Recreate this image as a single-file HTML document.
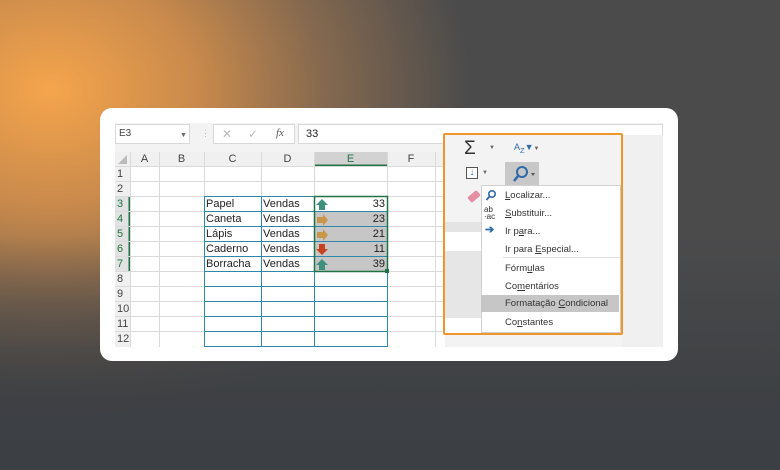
<!DOCTYPE html>
<html><head><meta charset="utf-8"><style>
*{margin:0;padding:0;box-sizing:border-box}
body{width:780px;height:470px;overflow:hidden;position:relative;font-family:"Liberation Sans",sans-serif;
background:radial-gradient(ellipse 420px 330px at 50px 90px,#f5a54c 0%,#c98a4c 35%,#85694f 65%,#4b4b4c 100%),#3d4044;}
.a{position:absolute}
.card{left:100px;top:108px;width:578px;height:253px;background:#fff;border-radius:12px}
.t{font-size:11px;color:#222;white-space:nowrap}
.h{font-size:11px;color:#444;text-align:center}
.m{font-size:9.5px;color:#333;white-space:nowrap}
</style></head><body>
<div class="a" style="left:0;top:0;width:780px;height:470px;background:linear-gradient(180deg,rgba(60,63,67,0) 50%,rgba(60,63,67,.9) 85%,#3c3f43 100%)"></div>
<div class="a card"></div>
<!-- excel area -->
<div class="a" style="left:115px;top:123px;width:548px;height:224px;background:#f3f3f3"></div>
<div class="a" style="left:115px;top:124px;width:75px;height:20px;background:#fff;border:1px solid #d8d8d8"></div>
<div class="a t" style="left:119px;top:128px;font-size:10px;color:#444">E3</div>
<div class="a" style="left:180px;top:132px;font-size:7px;color:#666">▼</div>
<div class="a" style="left:201px;top:128px;font-size:9px;color:#bbb">⋮</div>
<div class="a" style="left:213px;top:124px;width:82px;height:20px;background:#fff;border:1px solid #d8d8d8"></div>
<div class="a" style="left:222px;top:127px;font-size:12px;color:#bbb">✕</div>
<div class="a" style="left:248px;top:127px;font-size:12px;color:#bbb">✓</div>
<div class="a" style="left:276px;top:127px;font-size:11px;color:#555;font-style:italic;font-family:'Liberation Serif',serif">fx</div>
<div class="a" style="left:298px;top:124px;width:365px;height:20px;background:#fff;border:1px solid #d8d8d8"></div>
<div class="a t" style="left:306px;top:128px;font-size:11px">33</div>
<!-- grid -->
<svg class="a" style="left:115px;top:152px" width="330" height="195">
<rect x="0" y="0" width="330" height="195" fill="#fff"/>
<rect x="0" y="0" width="330" height="14" fill="#f0f0f0"/>
<rect x="0" y="0" width="15" height="195" fill="#f0f0f0"/>
<rect x="199" y="0" width="73" height="14" fill="#d2d2d2"/>
<rect x="0" y="44" width="15" height="75" fill="#e2e2e2"/>
<line x1="199" y1="13.5" x2="272" y2="13.5" stroke="#217346" stroke-width="2"/>
<line x1="14.5" y1="44" x2="14.5" y2="119" stroke="#217346" stroke-width="2"/>
<g stroke="#dadada" stroke-width="1">
<line x1="15.5" y1="0" x2="15.5" y2="195"/><line x1="44.5" y1="0" x2="44.5" y2="195"/><line x1="89.5" y1="0" x2="89.5" y2="195"/>
<line x1="146.5" y1="0" x2="146.5" y2="195"/><line x1="199.5" y1="0" x2="199.5" y2="195"/><line x1="272.5" y1="0" x2="272.5" y2="195"/><line x1="320.5" y1="0" x2="320.5" y2="195"/>
<line x1="0" y1="14.5" x2="330" y2="14.5"/><line x1="0" y1="29.5" x2="330" y2="29.5"/><line x1="0" y1="44.5" x2="330" y2="44.5"/>
<line x1="0" y1="59.5" x2="330" y2="59.5"/><line x1="0" y1="74.5" x2="330" y2="74.5"/><line x1="0" y1="89.5" x2="330" y2="89.5"/>
<line x1="0" y1="104.5" x2="330" y2="104.5"/><line x1="0" y1="119.5" x2="330" y2="119.5"/><line x1="0" y1="134.5" x2="330" y2="134.5"/>
<line x1="0" y1="149.5" x2="330" y2="149.5"/><line x1="0" y1="164.5" x2="330" y2="164.5"/><line x1="0" y1="179.5" x2="330" y2="179.5"/>
</g>
<rect x="200" y="60" width="72" height="59" fill="#c6c6c6"/>
<g stroke="#2e86a8" stroke-width="1" fill="none">
<rect x="89.5" y="44.5" width="183" height="150"/>
<line x1="146.5" y1="44" x2="146.5" y2="195"/><line x1="199.5" y1="44" x2="199.5" y2="195"/>
<line x1="89" y1="59.5" x2="273" y2="59.5"/><line x1="89" y1="74.5" x2="273" y2="74.5"/><line x1="89" y1="89.5" x2="273" y2="89.5"/>
<line x1="89" y1="104.5" x2="273" y2="104.5"/><line x1="89" y1="119.5" x2="273" y2="119.5"/><line x1="89" y1="134.5" x2="273" y2="134.5"/>
<line x1="89" y1="149.5" x2="273" y2="149.5"/><line x1="89" y1="164.5" x2="273" y2="164.5"/><line x1="89" y1="179.5" x2="273" y2="179.5"/>
</g>
<rect x="199.5" y="44.5" width="73" height="75" fill="none" stroke="#217346" stroke-width="1.5"/>
<rect x="270" y="117" width="4" height="4" fill="#217346"/>
<path d="M3 12 L12 3 L12 12Z" fill="#bbb"/>
<!-- arrows -->
<path d="M207 47 L213 53 L210 53 L210 58 L204 58 L204 53 L201 53Z" fill="#3f8f7f"/>
<path d="M213 68 L208 62 L208 65 L202 65 L202 71 L208 71 L208 74Z" fill="#c9974a"/>
<path d="M213 83 L208 77 L208 80 L202 80 L202 86 L208 86 L208 89Z" fill="#c9974a"/>
<path d="M207 103 L213 97 L210 97 L210 92 L204 92 L204 97 L201 97Z" fill="#c8411e"/>
<path d="M207 107 L213 113 L210 113 L210 118 L204 118 L204 113 L201 113Z" fill="#3f8f7f"/>
</svg>
<div class="a h" style="left:130px;top:153px;width:29px">A</div>
<div class="a h" style="left:159px;top:153px;width:45px">B</div>
<div class="a h" style="left:204px;top:153px;width:57px">C</div>
<div class="a h" style="left:261px;top:153px;width:53px">D</div>
<div class="a h" style="left:314px;top:153px;width:73px;color:#217346">E</div>
<div class="a h" style="left:387px;top:153px;width:48px">F</div>
<div class="a" style="left:117px;top:167px;font-size:11px;color:#444;line-height:15px">1<br>2<br><span style="color:#217346">3<br>4<br>5<br>6<br>7</span><br>8<br>9<br>10<br>11<br>12</div>
<div class="a t" style="left:206px;top:197px;line-height:15px">Papel<br>Caneta<br>Lápis<br>Caderno<br>Borracha</div>
<div class="a t" style="left:263px;top:197px;line-height:15px">Vendas<br>Vendas<br>Vendas<br>Vendas<br>Vendas</div>
<div class="a t" style="left:360px;top:197px;width:25px;text-align:right;line-height:15px">33<br>23<br>21<br>11<br>39</div>
<!-- right panel -->
<div class="a" style="left:622px;top:135px;width:41px;height:212px;background:#f0f0f0"></div>
<div class="a" style="left:445px;top:135px;width:177px;height:198px;background:#f3f3f3"></div>
<div class="a" style="left:445px;top:222px;width:36px;height:10px;background:#e4e4e4"></div>
<div class="a" style="left:445px;top:232px;width:36px;height:19px;background:#fff"></div>
<div class="a" style="left:445px;top:251px;width:36px;height:67px;background:#e6e6e6"></div>
<div class="a" style="left:445px;top:318px;width:36px;height:15px;background:#fff"></div>
<div class="a" style="left:464px;top:138px;font-size:19px;color:#333">Σ</div>
<div class="a" style="left:489px;top:145px;font-size:6px;color:#666">▼</div>
<div class="a" style="left:514px;top:142px;font-size:9px;color:#2e6aa8">A<sub>Z</sub>▼<span style="font-size:6px;color:#666">▼</span></div>
<div class="a" style="left:466px;top:167px;width:12px;height:12px;border:1px solid #555;background:#fff;color:#2e6aa8;font-size:10px;line-height:10px;text-align:center;font-weight:bold">↓</div>
<div class="a" style="left:482px;top:170px;font-size:6px;color:#666">▼</div>
<div class="a" style="left:505px;top:162px;width:34px;height:23px;background:#c8c8c8"></div>
<svg class="a" style="left:512px;top:165px" width="26" height="18"><circle cx="10" cy="7" r="5" fill="none" stroke="#2e6aa8" stroke-width="2"/><line x1="6" y1="11" x2="2" y2="16" stroke="#2e6aa8" stroke-width="2.5"/><path d="M19 8 L23 8 L21 11Z" fill="#555"/></svg>
<div class="a" style="left:468px;top:193px;width:12px;height:7px;background:#e58fa4;transform:rotate(-40deg);border-radius:2px"></div>
<!-- menu -->
<div class="a" style="left:481px;top:185px;width:140px;height:148px;background:#fff;border:1px solid #d0d0d0"></div>
<div class="a" style="left:481px;top:295px;width:138px;height:17px;background:#c6c6c6"></div>
<div class="a" style="left:503px;top:257px;width:117px;height:1px;background:#e0e0e0"></div>
<svg class="a" style="left:485px;top:189px" width="12" height="12"><circle cx="7" cy="5" r="3.2" fill="none" stroke="#2e6aa8" stroke-width="1.6"/><line x1="4.5" y1="7.5" x2="1.5" y2="11" stroke="#2e6aa8" stroke-width="1.8"/></svg>
<div class="a" style="left:484px;top:206px;font-size:8px;line-height:7px;color:#333">ab<br>·ac</div>
<div class="a" style="left:485px;top:223px;font-size:11px;color:#2e6aa8;font-weight:bold">➔</div>
<div class="a m" style="left:505px;top:190px"><u>L</u>ocalizar...</div>
<div class="a m" style="left:505px;top:208px"><u>S</u>ubstituir...</div>
<div class="a m" style="left:505px;top:226px">Ir p<u>a</u>ra...</div>
<div class="a m" style="left:505px;top:244px">Ir para <u>E</u>special...</div>
<div class="a m" style="left:505px;top:263px">Fórm<u>u</u>las</div>
<div class="a m" style="left:505px;top:281px">Co<u>m</u>entários</div>
<div class="a m" style="left:505px;top:298px">Formatação <u>C</u>ondicional</div>
<div class="a m" style="left:505px;top:317px">Co<u>n</u>stantes</div>
<div class="a" style="left:443px;top:133px;width:180px;height:202px;border:2.5px solid #f0952a;border-radius:2px"></div>
</body></html>
